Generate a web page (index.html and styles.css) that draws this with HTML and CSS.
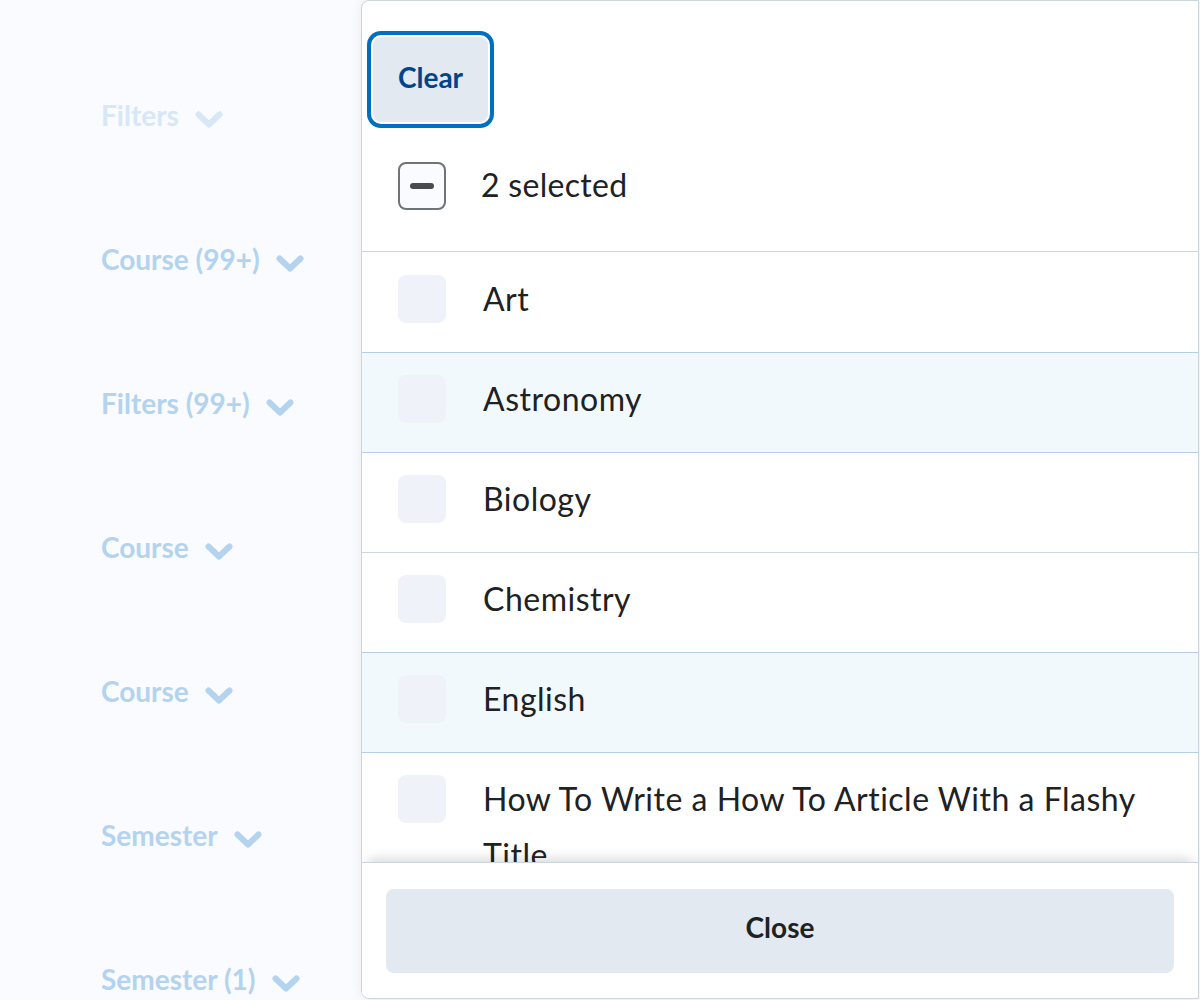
FILE: index.html
```html
<!DOCTYPE html>
<html lang="en">
<head>
<meta charset="utf-8">
<title>Filter</title>
<link rel="stylesheet" href="styles.css">
</head>
<body>
<div class="page">
  <aside class="filters">
    <div class="opener faint"><span class="opener-text">Filters</span><svg class="chev" viewBox="0 0 28 17" width="28" height="17"><path d="M3.5 3.5 L14 13.5 L24.5 3.5"/></svg></div>
    <div class="opener"><span class="opener-text">Course (99+)</span><svg class="chev" viewBox="0 0 28 17" width="28" height="17"><path d="M3.5 3.5 L14 13.5 L24.5 3.5"/></svg></div>
    <div class="opener"><span class="opener-text">Filters (99+)</span><svg class="chev" viewBox="0 0 28 17" width="28" height="17"><path d="M3.5 3.5 L14 13.5 L24.5 3.5"/></svg></div>
    <div class="opener"><span class="opener-text">Course</span><svg class="chev" viewBox="0 0 28 17" width="28" height="17"><path d="M3.5 3.5 L14 13.5 L24.5 3.5"/></svg></div>
    <div class="opener"><span class="opener-text">Course</span><svg class="chev" viewBox="0 0 28 17" width="28" height="17"><path d="M3.5 3.5 L14 13.5 L24.5 3.5"/></svg></div>
    <div class="opener"><span class="opener-text">Semester</span><svg class="chev" viewBox="0 0 28 17" width="28" height="17"><path d="M3.5 3.5 L14 13.5 L24.5 3.5"/></svg></div>
    <div class="opener"><span class="opener-text">Semester (1)</span><svg class="chev" viewBox="0 0 28 17" width="28" height="17"><path d="M3.5 3.5 L14 13.5 L24.5 3.5"/></svg></div>
  </aside>

  <section class="panel">
    <div class="panel-head">
      <button class="clear" type="button">Clear</button>
      <div class="select-all">
        <span class="cb cb-ind"><span class="cb-bar"></span></span>
        <span class="select-label">2 selected</span>
      </div>
    </div>

    <ul class="list">
      <li class="row pre-hl"><span class="cb"></span><span class="row-text">Art</span></li>
      <li class="row hl"><span class="cb"></span><span class="row-text">Astronomy</span></li>
      <li class="row"><span class="cb"></span><span class="row-text">Biology</span></li>
      <li class="row pre-hl"><span class="cb"></span><span class="row-text">Chemistry</span></li>
      <li class="row hl"><span class="cb"></span><span class="row-text">English</span></li>
      <li class="row"><span class="cb"></span><span class="row-text">How To Write a How To Article With a Flashy Title</span></li>
    </ul>

    <div class="panel-foot">
      <button class="close" type="button">Close</button>
    </div>
  </section>
</div>
</body>
</html>
```

FILE: styles.css
```css
* { box-sizing: border-box; }

html, body {
  margin: 0;
  padding: 0;
}

body {
  background: #f9fbff;
  font-family: Lato, "Noto Sans", "Liberation Sans", sans-serif;
  color: #202122;
  overflow: hidden;
}

.page {
  display: flex;
  width: 1200px;
  height: 1000px;
  overflow: hidden;
}

/* left column */
.filters {
  width: 361px;
  flex: 0 0 361px;
  padding: 43px 0 0 101px;
  display: flex;
  flex-direction: column;
}

.opener {
  height: 144px;
  flex: 0 0 144px;
  display: flex;
  align-items: center;
  gap: 16px;
  color: #b3d3ef;
}

.opener.faint {
  color: #d7e7f6;
}

.opener-text {
  font-size: 28px;
  font-weight: 700;
  line-height: 34px;
  white-space: nowrap;
}

.chev {
  margin-top: 8px;
  flex: 0 0 auto;
}

.chev path {
  fill: none;
  stroke: currentColor;
  stroke-width: 6;
  stroke-linecap: round;
  stroke-linejoin: round;
}

/* panel */
.panel {
  width: 838px;
  height: 999px;
  flex: 0 0 838px;
  background: #ffffff;
  border: 1px solid #cdd5dc;
  border-radius: 8px 0 0 8px;
  box-shadow: 0 0 12px rgba(0, 0, 0, 0.07);
  display: flex;
  flex-direction: column;
  overflow: hidden;
}

.panel-head {
  flex: 0 0 auto;
  height: 251px;
  border-bottom: 1px solid #cdd5dc;
  padding: 36px 0 0 11px;
}

.clear {
  display: block;
  width: 115px;
  height: 85px;
  border: none;
  border-radius: 8px;
  background: #e3e9f1;
  color: #004489;
  font-family: Lato, "Noto Sans", "Liberation Sans", sans-serif;
  font-size: 28px;
  font-weight: 700;
  padding: 0 0 5px 0;
  box-shadow: 0 0 0 2px #ffffff, 0 0 0 6px #006fbf;
}

.select-all {
  display: flex;
  align-items: center;
  gap: 35px;
  margin: 40px 0 0 25px;
}

.select-label {
  font-size: 32px;
  line-height: 46px;
  letter-spacing: 0.3px;
  margin-top: -2px;
}

.cb {
  flex: 0 0 48px;
  width: 48px;
  height: 48px;
  border-radius: 8px;
  background: #eff3f9;
  display: flex;
  align-items: center;
  justify-content: center;
}

.cb-ind {
  background: #f9fbff;
  border: 2px solid #6e7477;
}

.cb-bar {
  width: 24px;
  height: 6px;
  border-radius: 3px;
  background: #494c4e;
}

/* list */
.list {
  flex: 1 1 auto;
  min-height: 0;
  overflow: hidden;
  list-style: none;
  margin: 0;
  padding: 1px 0 0 0;
}

.row {
  display: flex;
  align-items: flex-start;
  gap: 37px;
  padding: 18px 40px 25px 36px;
  border-bottom: 1px solid #cdd5dc;
}

.row .cb {
  margin-top: 4px;
}

.row.hl {
  background: #f2f9fd;
  border-bottom-color: #b7cde8;
}

.row.pre-hl {
  border-bottom-color: #b7cde8;
}

.row-text {
  font-size: 32px;
  line-height: 56px;
  letter-spacing: 0.5px;
}

/* footer */
.panel-foot {
  flex: 0 0 auto;
  position: relative;
  z-index: 1;
  background: #ffffff;
  border-top: 1px solid #cdd5dc;
  padding: 26px 24px 25px 24px;
  box-shadow: 0 -8px 12px -6px rgba(0, 0, 0, 0.18);
}

.close {
  display: block;
  width: 100%;
  height: 84px;
  border: none;
  border-radius: 8px;
  background: #e3e9f1;
  color: #202122;
  font-family: Lato, "Noto Sans", "Liberation Sans", sans-serif;
  font-size: 28px;
  font-weight: 700;
  padding: 0 0 8px 0;
}
```
